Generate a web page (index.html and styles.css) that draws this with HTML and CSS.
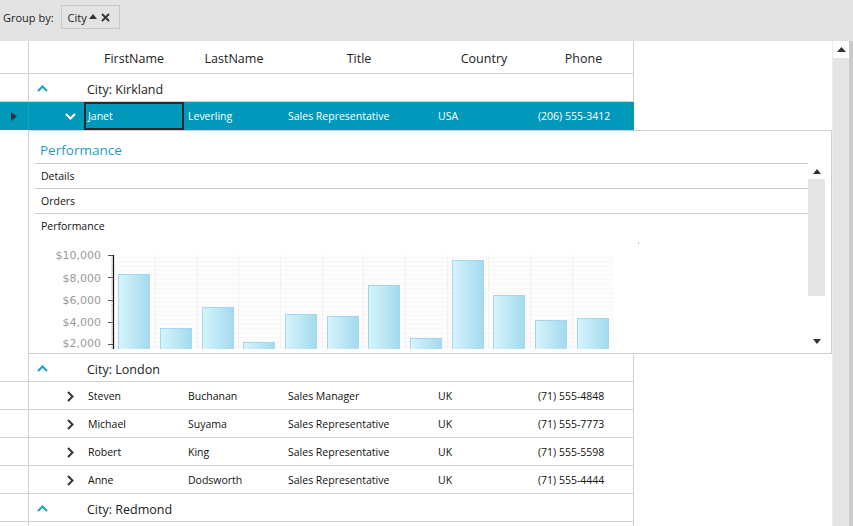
FILE: index.html
```html
<!DOCTYPE html>
<html>
<head>
<meta charset="utf-8">
<link rel="stylesheet" href="styles.css">
</head>
<body>
<div class="topbar">
  <span class="gb-label">Group by:</span>
  <span class="chip">City<svg class="sort" width="8" height="5" viewBox="0 0 8 5"><path d="M0 5 L4 0 L8 5 Z" fill="#333"/></svg><svg class="close" width="9" height="9" viewBox="0 0 9 9"><path d="M1 1 L8 8 M8 1 L1 8" stroke="#333" stroke-width="1.8"/></svg></span>
</div>
<div class="main">
  <div class="content">
    <div class="row header">
      <div class="ind"></div>
      <div class="indent2"></div>
      <div class="hc c-first">FirstName</div>
      <div class="hc c-last">LastName</div>
      <div class="hc c-title">Title</div>
      <div class="hc c-country">Country</div>
      <div class="hc c-phone">Phone</div>
    </div>

    <div class="row group">
      <div class="ind"></div>
      <div class="gchev"><svg width="11" height="7" viewBox="0 0 11 7"><path d="M1 6 L5.5 1.5 L10 6" fill="none" stroke="#1d9fc2" stroke-width="2"/></svg></div>
      <div class="gtext">City: Kirkland</div>
    </div>

    <div class="row data selected">
      <div class="ind"><svg width="6" height="9" viewBox="0 0 6 9"><path d="M0 0 L6 4.5 L0 9 Z" fill="#333"/></svg></div>
      <div class="indent"></div>
      <div class="exp"><svg width="11" height="7" viewBox="0 0 11 7"><path d="M1 1 L5.5 5.5 L10 1" fill="none" stroke="#fff" stroke-width="2"/></svg></div>
      <div class="dc c-first current">Janet</div>
      <div class="dc c-last">Leverling</div>
      <div class="dc c-title">Sales Representative</div>
      <div class="dc c-country">USA</div>
      <div class="dc c-phone">(206) 555-3412</div>
    </div>

    <div class="details">
      <div class="dtitle">Performance</div>
      <div class="panel">
        <div class="panel-items">
          <div class="pitem">Details</div>
          <div class="pitem">Orders</div>
          <div class="pitem last">Performance</div>
          <svg class="chart" width="772" height="140" viewBox="0 0 772 140">
            <defs>
              <linearGradient id="bar" x1="0" y1="0" x2="1" y2="0">
                <stop offset="0" stop-color="#d6f4fd"/>
                <stop offset="1" stop-color="#a4daed"/>
              </linearGradient>
              <pattern id="hgrid" width="10" height="4.46" patternUnits="userSpaceOnUse">
                <rect width="10" height="1" fill="#f6f6f6"/>
              </pattern>
            </defs>
            <rect x="79" y="16" width="499" height="124" fill="#fdfdfd"/>
            <rect x="79" y="16" width="499" height="124" fill="url(#hgrid)"/>
            <g stroke="#f1f1f1" stroke-width="1">
              <line x1="120.5" y1="16" x2="120.5" y2="140"/>
              <line x1="162.5" y1="16" x2="162.5" y2="140"/>
              <line x1="203.5" y1="16" x2="203.5" y2="140"/>
              <line x1="245.5" y1="16" x2="245.5" y2="140"/>
              <line x1="287.5" y1="16" x2="287.5" y2="140"/>
              <line x1="328.5" y1="16" x2="328.5" y2="140"/>
              <line x1="370.5" y1="16" x2="370.5" y2="140"/>
              <line x1="412.5" y1="16" x2="412.5" y2="140"/>
              <line x1="453.5" y1="16" x2="453.5" y2="140"/>
              <line x1="495.5" y1="16" x2="495.5" y2="140"/>
              <line x1="537.5" y1="16" x2="537.5" y2="140"/>
            </g>
            <g class="ylab" font-family="DejaVu Sans, Verdana, sans-serif" font-size="11" fill="#9a9a9a" text-anchor="end">
              <text x="66" y="20">$10,000</text>
              <text x="66" y="43">$8,000</text>
              <text x="66" y="65">$6,000</text>
              <text x="66" y="87">$4,000</text>
              <text x="66" y="108">$2,000</text>
            </g>
            <g stroke="#555" stroke-width="1">
              <line x1="73" y1="16.5" x2="78" y2="16.5"/>
              <line x1="73" y1="38.5" x2="78" y2="38.5"/>
              <line x1="73" y1="61.5" x2="78" y2="61.5"/>
              <line x1="73" y1="83.5" x2="78" y2="83.5"/>
              <line x1="73" y1="105.5" x2="78" y2="105.5"/>
            </g>
            <g stroke="#999" stroke-width="0.6">
              <line x1="76" y1="18.7" x2="78" y2="18.7"/><line x1="76" y1="20.9" x2="78" y2="20.9"/><line x1="76" y1="23.2" x2="78" y2="23.2"/><line x1="76" y1="25.4" x2="78" y2="25.4"/><line x1="76" y1="27.6" x2="78" y2="27.6"/><line x1="76" y1="29.9" x2="78" y2="29.9"/><line x1="76" y1="32.1" x2="78" y2="32.1"/><line x1="76" y1="34.3" x2="78" y2="34.3"/><line x1="76" y1="36.5" x2="78" y2="36.5"/>
              <line x1="76" y1="41" x2="78" y2="41"/><line x1="76" y1="43.2" x2="78" y2="43.2"/><line x1="76" y1="45.4" x2="78" y2="45.4"/><line x1="76" y1="47.7" x2="78" y2="47.7"/><line x1="76" y1="49.9" x2="78" y2="49.9"/><line x1="76" y1="52.1" x2="78" y2="52.1"/><line x1="76" y1="54.4" x2="78" y2="54.4"/><line x1="76" y1="56.6" x2="78" y2="56.6"/><line x1="76" y1="58.8" x2="78" y2="58.8"/>
              <line x1="76" y1="63.3" x2="78" y2="63.3"/><line x1="76" y1="65.5" x2="78" y2="65.5"/><line x1="76" y1="67.7" x2="78" y2="67.7"/><line x1="76" y1="70" x2="78" y2="70"/><line x1="76" y1="72.2" x2="78" y2="72.2"/><line x1="76" y1="74.4" x2="78" y2="74.4"/><line x1="76" y1="76.7" x2="78" y2="76.7"/><line x1="76" y1="78.9" x2="78" y2="78.9"/><line x1="76" y1="81.1" x2="78" y2="81.1"/>
              <line x1="76" y1="85.6" x2="78" y2="85.6"/><line x1="76" y1="87.8" x2="78" y2="87.8"/><line x1="76" y1="90" x2="78" y2="90"/><line x1="76" y1="92.3" x2="78" y2="92.3"/><line x1="76" y1="94.5" x2="78" y2="94.5"/><line x1="76" y1="96.7" x2="78" y2="96.7"/><line x1="76" y1="99" x2="78" y2="99"/><line x1="76" y1="101.2" x2="78" y2="101.2"/><line x1="76" y1="103.4" x2="78" y2="103.4"/>
              <line x1="76" y1="107.9" x2="78" y2="107.9"/><line x1="76" y1="110.1" x2="78" y2="110.1"/>
            </g>
            <line x1="78.5" y1="16" x2="78.5" y2="140" stroke="#111" stroke-width="1.2"/>
            <g fill="url(#bar)" stroke="#a3d6f2" stroke-width="1">
              <rect x="83.5" y="35.5" width="31" height="110"/>
              <rect x="125.5" y="89.5" width="31" height="60"/>
              <rect x="167.5" y="68.5" width="31" height="80"/>
              <rect x="208.5" y="103.5" width="31" height="50"/>
              <rect x="250.5" y="75.5" width="31" height="70"/>
              <rect x="292.5" y="77.5" width="31" height="70"/>
              <rect x="333.5" y="46.5" width="31" height="100"/>
              <rect x="375.5" y="99.5" width="31" height="50"/>
              <rect x="417.5" y="21.5" width="31" height="120"/>
              <rect x="458.5" y="56.5" width="31" height="90"/>
              <rect x="500.5" y="81.5" width="31" height="70"/>
              <rect x="542.5" y="79.5" width="31" height="70"/>
            </g>
            <rect x="603" y="3" width="1" height="2" fill="#bbb"/>
          </svg>
        </div>
        <div class="pscroll">
          <div class="sbtn"><svg width="8" height="5" viewBox="0 0 8 5"><path d="M0 5 L4 0 L8 5 Z" fill="#333"/></svg></div>
          <div class="pthumb"></div>
          <div class="pspace"></div>
          <div class="sbtn"><svg width="8" height="5" viewBox="0 0 8 5"><path d="M0 0 L4 5 L8 0 Z" fill="#333"/></svg></div>
        </div>
      </div>
    </div>

    <div class="row group">
      <div class="ind"></div>
      <div class="gchev"><svg width="11" height="7" viewBox="0 0 11 7"><path d="M1 6 L5.5 1.5 L10 6" fill="none" stroke="#1d9fc2" stroke-width="2"/></svg></div>
      <div class="gtext">City: London</div>
    </div>

    <div class="row data">
      <div class="ind"></div>
      <div class="indent"></div>
      <div class="exp"><svg width="7" height="11" viewBox="0 0 7 11"><path d="M1 1 L5.5 5.5 L1 10" fill="none" stroke="#333" stroke-width="2"/></svg></div>
      <div class="dc c-first">Steven</div>
      <div class="dc c-last">Buchanan</div>
      <div class="dc c-title">Sales Manager</div>
      <div class="dc c-country">UK</div>
      <div class="dc c-phone">(71) 555-4848</div>
    </div>
    <div class="row data">
      <div class="ind"></div>
      <div class="indent"></div>
      <div class="exp"><svg width="7" height="11" viewBox="0 0 7 11"><path d="M1 1 L5.5 5.5 L1 10" fill="none" stroke="#333" stroke-width="2"/></svg></div>
      <div class="dc c-first">Michael</div>
      <div class="dc c-last">Suyama</div>
      <div class="dc c-title">Sales Representative</div>
      <div class="dc c-country">UK</div>
      <div class="dc c-phone">(71) 555-7773</div>
    </div>
    <div class="row data">
      <div class="ind"></div>
      <div class="indent"></div>
      <div class="exp"><svg width="7" height="11" viewBox="0 0 7 11"><path d="M1 1 L5.5 5.5 L1 10" fill="none" stroke="#333" stroke-width="2"/></svg></div>
      <div class="dc c-first">Robert</div>
      <div class="dc c-last">King</div>
      <div class="dc c-title">Sales Representative</div>
      <div class="dc c-country">UK</div>
      <div class="dc c-phone">(71) 555-5598</div>
    </div>
    <div class="row data">
      <div class="ind"></div>
      <div class="indent"></div>
      <div class="exp"><svg width="7" height="11" viewBox="0 0 7 11"><path d="M1 1 L5.5 5.5 L1 10" fill="none" stroke="#333" stroke-width="2"/></svg></div>
      <div class="dc c-first">Anne</div>
      <div class="dc c-last">Dodsworth</div>
      <div class="dc c-title">Sales Representative</div>
      <div class="dc c-country">UK</div>
      <div class="dc c-phone">(71) 555-4444</div>
    </div>

    <div class="row group">
      <div class="ind"></div>
      <div class="gchev"><svg width="11" height="7" viewBox="0 0 11 7"><path d="M1 6 L5.5 1.5 L10 6" fill="none" stroke="#1d9fc2" stroke-width="2"/></svg></div>
      <div class="gtext">City: Redmond</div>
    </div>
    <div class="row filler"><div class="ind"></div></div>
  </div>

  <div class="vscroll">
    <div class="vtrack">
      <div class="vbtn"><svg width="9" height="5" viewBox="0 0 9 5"><path d="M0 5 L4.5 0 L9 5 Z" fill="#333"/></svg></div>
      <div class="vthumb"></div>
    </div>
    <div class="vedge"></div>
  </div>
</div>
</body>
</html>
```

FILE: styles.css
```css
* { box-sizing: border-box; }
html, body { margin: 0; padding: 0; }
body {
  width: 853px;
  height: 526px;
  overflow: hidden;
  background: #fff;
  font-family: "Open Sans", "Noto Sans", sans-serif;
  color: #111;
  display: flex;
  flex-direction: column;
}

.topbar {
  height: 41px;
  background: #e3e3e3;
  display: flex;
  align-items: flex-start;
  padding: 5px 0 0 3px;
  flex: none;
}
.gb-label {
  font-size: 11px;
  line-height: 26px;
  color: #222;
  margin-right: 7px;
}
.chip {
  height: 24px;
  border: 1px solid #c9c9c9;
  display: flex;
  align-items: center;
  padding: 0 9px 0 6px;
  font-size: 11px;
  color: #222;
}
.chip .sort { margin: 0 3px 1px 2px; }
.chip .close { margin-left: 1px; }

.main {
  flex: 1;
  display: flex;
  min-height: 0;
}
.content {
  width: 832px;
  display: flex;
  flex-direction: column;
}

.row {
  width: 634px;
  display: flex;
  border-right: 1px solid #d2d2d2;
  border-bottom: 1px solid #d2d2d2;
  height: 28px;
  flex: none;
}
.ind {
  width: 29px;
  border-right: 1px solid #d2d2d2;
  display: flex;
  align-items: center;
  justify-content: center;
  flex: none;
}
.header { height: 33px; }
.header .indent2 { width: 55px; }
.hc {
  font-size: 12.5px;
  color: #222;
  text-align: center;
  line-height: 32px;
  padding-top: 2px;
}
.c-first { width: 100px; }
.c-last { width: 100px; }
.c-title { width: 150px; }
.c-country { width: 100px; }
.c-phone { width: 99px; }

.group .gchev {
  width: 27px;
  display: flex;
  align-items: center;
  justify-content: center;
  padding-top: 2px;
}
.group .gtext {
  padding-left: 31px;
  padding-top: 2px;
  font-size: 12.5px;
  line-height: 27px;
  color: #222;
}

.data .indent { width: 27px; }
.data .exp {
  width: 28px;
  display: flex;
  align-items: center;
  justify-content: center;
  padding-top: 1px;
}
.dc {
  font-size: 10.5px;
  line-height: 28px;
  padding-left: 4px;
  white-space: nowrap;
  color: #111;
}
.selected {
  background: #0099bc;
  border-bottom: none;
  border-right-color: #0099bc;
}
.selected .ind { border-right-color: #1aa5c4; }
.selected .dc { color: #fff; }
.selected .current {
  border: 2px solid #2b2b2b;
  padding-left: 2px;
  padding-top: 1px;
  line-height: 23px;
}

.details {
  margin-left: 28px;
  width: 804px;
  height: 224px;
  border: 1px solid #cfcfcf;
  padding: 0 6px 0 6px;
  flex: none;
  display: flex;
  flex-direction: column;
}
.dtitle {
  height: 32px;
  padding-left: 5px;
  font-size: 13.5px;
  line-height: 38px;
  color: #1a9ec4;
  font-weight: 500;
}
.panel {
  height: 186px;
  display: flex;
}
.panel-items {
  width: 773px;
  overflow: hidden;
  border-top: 1px solid #cdcdcd;
}
.pitem {
  height: 25px;
  border-bottom: 1px solid #cdcdcd;
  font-size: 10.5px;
  line-height: 24px;
  padding-left: 6px;
  color: #111;
}
.pitem.last { border-bottom: none; }
.chart { display: block; }

.pscroll {
  width: 17px;
  display: flex;
  flex-direction: column;
}
.sbtn {
  height: 16px;
  display: flex;
  align-items: center;
  justify-content: center;
}
.pthumb {
  height: 117px;
  background: #e6e6e6;
}
.pspace { flex: 1; }

.filler { flex: 1; height: auto; border-bottom: none; }

.vscroll {
  width: 21px;
  display: flex;
  border-left: 1px solid #ececec;
}
.vtrack {
  width: 16px;
  display: flex;
  flex-direction: column;
}
.vbtn {
  height: 17px;
  background: #fff;
  display: flex;
  align-items: center;
  justify-content: center;
}
.vthumb { flex: 1; background: #e5e5e5; }
.vedge { width: 4px; background: #cbcbcb; }
```
